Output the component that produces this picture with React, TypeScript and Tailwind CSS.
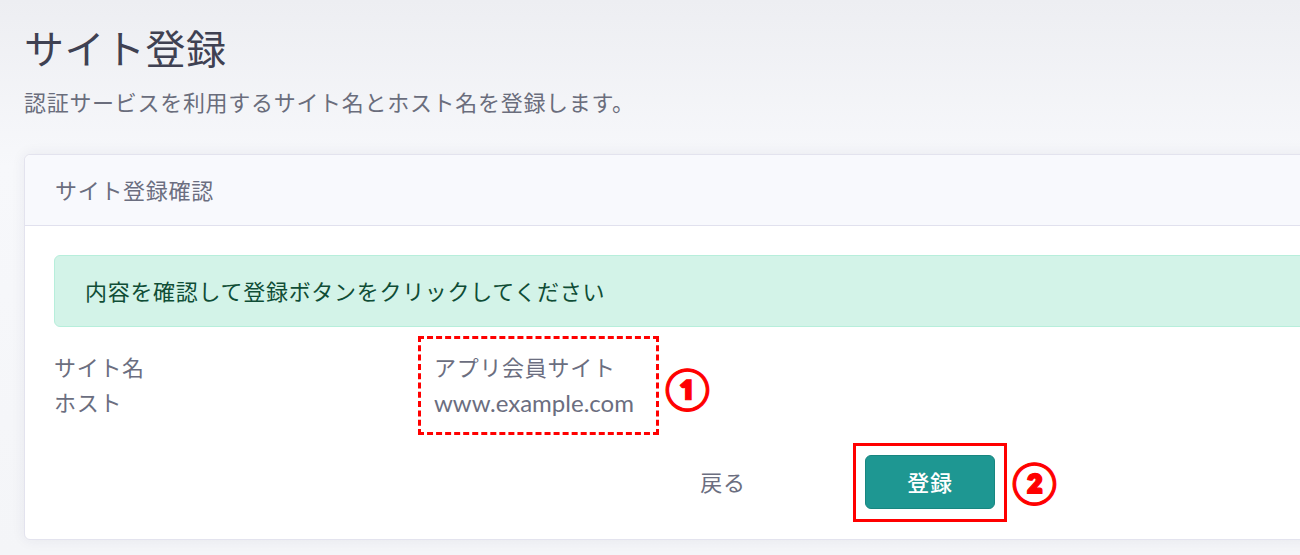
import React from 'react'

const font = { fontFamily: 'Lato, "Noto Sans CJK JP", sans-serif' }

function App() {
  return (
    <div
      className="h-[555px] w-[1300px] overflow-hidden bg-gradient-to-b from-[#edeef2] via-[#f7f8fb] via-30% to-[#f4f5f8] pl-[24px] pt-[25px] tracking-[0.7px]"
      style={font}
    >
      <h1 className="text-[40px] leading-[48px] tracking-[0.5px] text-[#3f4152]">サイト登録</h1>
      <p className="mt-[14px] text-[22px] leading-[32px] text-[#6a6d7c]">
        認証サービスを利用するサイト名とホスト名を登録します。
      </p>

      <div className="mt-[35px] w-[1320px] rounded-[6px] border border-[#e3e3ee] bg-white shadow-[0_0_14px_rgba(40,45,80,0.07)]">
        <div className="flex h-[71px] items-center rounded-t-[6px] border-b border-[#e1e1ee] bg-[#f8f9fd] px-[30px] text-[22px] text-[#6b6e80]">
          サイト登録確認
        </div>

        <div className="px-[29px] pb-[30px] pt-[29px]">
          <div className="flex h-[72px] items-center rounded-[6px] border border-[#b7eedb] bg-[#d3f3e8] px-[30px] text-[22px] text-[#0f4d36]">
            内容を確認して登録ボタンをクリックしてください
          </div>

          <div className="mt-[23px] flex text-[22px] leading-[35px] text-[#6b6e80]">
            <div className="w-[380px]">
              <div>サイト名</div>
              <div>ホスト</div>
            </div>
            <div className="relative">
              <div>アプリ会員サイト</div>
              <div className="text-[24px] tracking-normal">www.example.com</div>
              <span className="absolute -bottom-[15px] -left-[16px] -right-[25px] -top-[14px] border-[3px] border-dashed border-[#ff0000]" />
              <span className="absolute -right-[76px] top-[18px] text-[40px] font-black leading-[40px] tracking-normal text-[#ff0000] [-webkit-text-stroke:1.2px_#ff0000]">
                ①
              </span>
            </div>
          </div>

          <div className="mt-[35px] flex items-center pl-[604px]">
            <button className="h-[54px] w-[130px] text-[22px] tracking-[0.7px] text-[#6b6e80]">戻る</button>
            <div className="relative ml-[77px]">
              <button className="h-[54px] w-[130px] rounded-[6px] border border-[#188680] bg-[#1e9792] text-[22px] font-medium tracking-[0.7px] text-white">
                登録
              </button>
              <span className="absolute -bottom-[13px] -left-[12px] -right-[12px] -top-[12px] border-[3px] border-[#ff0000]" />
              <span className="absolute -right-[62px] top-[7px] text-[40px] font-black leading-[40px] tracking-normal text-[#ff0000] [-webkit-text-stroke:1.2px_#ff0000]">
                ②
              </span>
            </div>
          </div>
        </div>
      </div>
    </div>
  )
}

export default App
